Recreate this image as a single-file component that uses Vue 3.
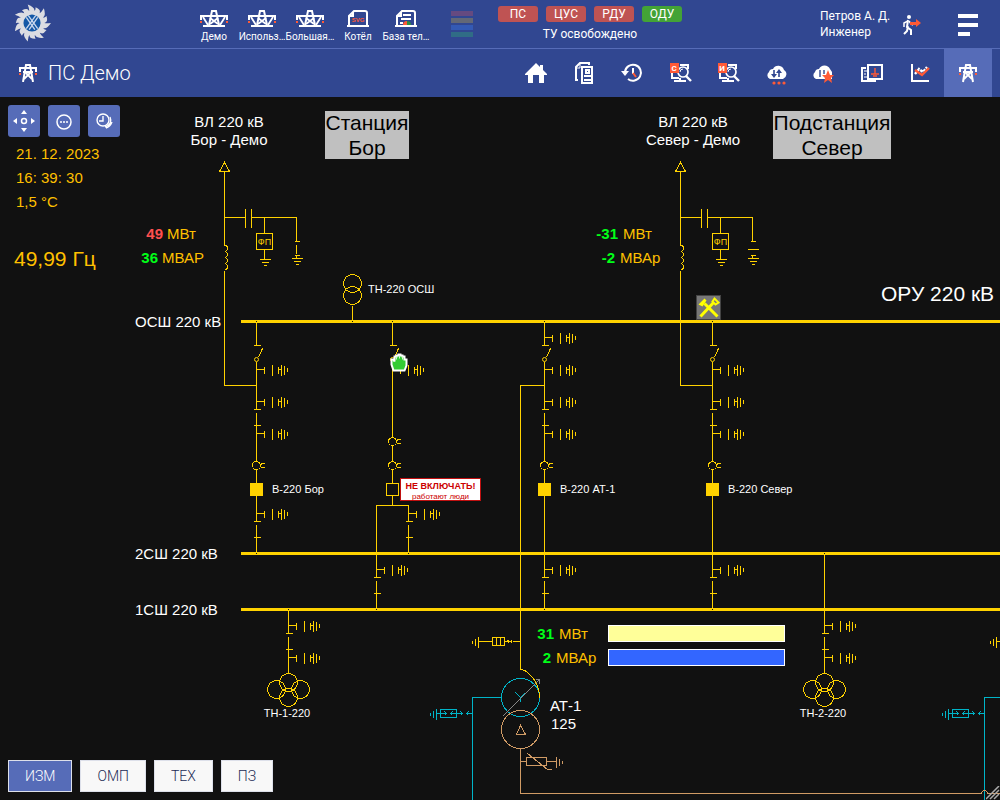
<script setup>
const shortcuts = [
  { label: 'Демо', icon: 'bridge' },
  { label: 'Использ…', icon: 'bridge' },
  { label: 'Большая…', icon: 'bridge' },
  { label: 'Котёл', icon: 'svg' },
  { label: 'База тел…', icon: 'report' }
]

const centers = [
  { name: 'ПС' }, { name: 'ЦУС' }, { name: 'РДУ' }, { name: 'ОДУ', on: true }
]

const nav = [
  { id: 'home', label: 'Главная' },
  { id: 'docs', label: 'Документы' },
  { id: 'history', label: 'История' },
  { id: 'searchS', label: 'Поиск сигналов', letter: 'С' },
  { id: 'searchI', label: 'Поиск измерений', letter: 'И' },
  { id: 'cloud', label: 'Обмен' },
  { id: 'star', label: 'Избранное' },
  { id: 'cards', label: 'Заземления' },
  { id: 'chart', label: 'Графики' },
  { id: 'pylon', label: 'Схема', active: true }
]

const layers = ['ИЗМ', 'ОМП', 'ТЕХ', 'ПЗ']

const gear = (() => {
  const teeth = 14
  const step = (Math.PI * 2) / teeth
  const p = (r, t) => `${(20 + r * Math.cos(t)).toFixed(1)} ${(20 + r * Math.sin(t)).toFixed(1)}`
  let d = ''
  for (let i = 0; i < teeth; i++) {
    const a = i * step
    const outer = i % 2 ? 17 : 20
    d += `${i ? 'L' : 'M'}${p(13, a)}Q${p(15, a + step * 0.1)} ${p(outer, a)}Q${p(17, a + step * 0.8)} ${p(14, a + step * 0.9)}`
  }
  return d + 'Z'
})()

const buses = [320, 552, 608]

const joints = [
  [256, 321], [352, 321], [392, 321], [544, 321], [712, 321],
  [256, 553], [408, 553], [824, 553],
  [288, 609], [376, 609], [544, 609], [712, 609]
]

const lineFeeders = [{ x: 224, closed: true }, { x: 680, closed: false }]

const wires = [
  'M256 321V345', 'M256 361V409', 'M256 425V461', 'M256 469V521', 'M256 537V553',
  'M392 321V345', 'M392 361V437', 'M392 445V461', 'M392 469V483', 'M392 495V505',
  'M376 577V505H408V521', 'M408 537V553', 'M376 593V609',
  'M544 321V345', 'M544 361V409', 'M544 425V461', 'M544 469V577', 'M544 593V609',
  'M544 385H520V669',
  'M712 321V345', 'M712 361V409', 'M712 425V461', 'M712 469V577', 'M712 593V609',
  'M288 609V633', 'M288 649V673', 'M824 553V633', 'M824 649V673', 'M352 305V321'
]

const openSwitches = [256, 392, 544, 712]

const closedSwitches = [
  [256, 409], [544, 409], [712, 409], [256, 521], [408, 521],
  [376, 577], [544, 577], [712, 577], [288, 633], [824, 633]
]

const groundSwitches = [
  [256, 369], [256, 401], [256, 433], [256, 513],
  [392, 369], [408, 513], [376, 569],
  [544, 337], [544, 369], [544, 401], [544, 433], [544, 569],
  [712, 369], [712, 401], [712, 433], [712, 569],
  [288, 625], [288, 657], [824, 625], [824, 657]
]

const currentTransformers = [[256, 465], [392, 441], [392, 465], [544, 465], [712, 465]]

const breakers = [
  { x: 256, on: true }, { x: 392, on: false }, { x: 544, on: true }, { x: 712, on: true }
]

const voltageTransformers = [288, 824]

const labels = [
  { x: 229, y: 127, t: 'ВЛ 220 кВ', c: 'mid' },
  { x: 229, y: 145, t: 'Бор - Демо', c: 'mid' },
  { x: 693, y: 127, t: 'ВЛ 220 кВ', c: 'mid' },
  { x: 693, y: 145, t: 'Север - Демо', c: 'mid' },
  { x: 135, y: 327, t: 'ОСШ 220 кВ' },
  { x: 135, y: 559, t: '2СШ 220 кВ' },
  { x: 135, y: 615, t: '1СШ 220 кВ' },
  { x: 881, y: 301, t: 'ОРУ 220 кВ', c: 'big' },
  { x: 550, y: 711, t: 'АТ-1' },
  { x: 551, y: 729, t: '125' },
  { x: 368, y: 293, t: 'ТН-220 ОСШ', c: 'small' },
  { x: 272, y: 493, t: 'В-220 Бор', c: 'small' },
  { x: 560, y: 493, t: 'В-220 АТ-1', c: 'small' },
  { x: 728, y: 493, t: 'В-220 Север', c: 'small' },
  { x: 287, y: 717, t: 'ТН-1-220', c: 'small mid' },
  { x: 823, y: 717, t: 'ТН-2-220', c: 'small mid' }
]

const measures = [
  { x: 163, y: 239, v: '49', ux: 167, u: 'МВт', red: true },
  { x: 158, y: 263, v: '36', ux: 162, u: 'МВАР' },
  { x: 618, y: 239, v: '-31', ux: 623, u: 'МВт' },
  { x: 615, y: 263, v: '-2', ux: 620, u: 'МВАр' },
  { x: 554, y: 639, v: '31', ux: 559, u: 'МВт' },
  { x: 551, y: 663, v: '2', ux: 556, u: 'МВАр' }
]
</script>

<template>
  <div class="app">
    <header class="topbar">
      <svg class="logo" viewBox="0 0 40 40" aria-hidden="true">
        <path :d="gear" fill="#dcdde2" />
        <circle cx="20" cy="20" r="9" fill="#1458a6" />
        <path d="M14 26L24 12M17 27L26 14M26 26L16 12M23 27L14 14" stroke="#c9d8ee" stroke-width="1.4" />
      </svg>

      <nav class="shortcuts">
        <a v-for="s in shortcuts" :key="s.label" href="#" class="shortcut">
          <svg v-if="s.icon === 'bridge'" width="28" height="17" viewBox="0 0 28 17" fill="none" stroke="#fff" stroke-width="2">
            <path d="M1 10V6H27V10M3 16H25M9 15L12 1H16L19 15" />
            <path d="M3 7L8 15M25 7L20 15M10 8L18 14M18 8L10 14" stroke-width="1.8" />
            <path d="M0 11H2V13H0ZM26 11H28V13H26Z" fill="#ff5a36" stroke="none" />
          </svg>
          <svg v-else-if="s.icon === 'svg'" width="24" height="17" viewBox="0 0 24 17" fill="none" stroke="#fff" stroke-width="2">
            <path d="M1 16H23M3 16V6L8 1H19Q21 1 21 3V16M3 6H7V2" />
            <text x="12" y="12" class="svg-tag">SVG</text>
          </svg>
          <svg v-else width="24" height="17" viewBox="0 0 24 17" fill="none" stroke="#fff" stroke-width="2">
            <path d="M1 16H23M3 16V6L8 1H19Q21 1 21 3V16M3 6H7V2" />
            <path d="M9 5H17M7 9H17M6 13H9" stroke-width="1.8" />
            <path d="M9 15A4 4 0 0 1 13 11V15Z" fill="#ff5a36" stroke="none" />
            <path d="M13 11A4 4 0 0 1 17 15H13Z" fill="#2f8f3f" stroke="none" />
          </svg>
          <span>{{ s.label }}</span>
        </a>
      </nav>

      <div class="stripes"><i class="s1"></i><i class="s2"></i><i class="s3"></i><i class="s4"></i></div>

      <div class="control">
        <div class="pills">
          <span v-for="c in centers" :key="c.name" class="pill" :class="{ on: c.on }">{{ c.name }}</span>
        </div>
        <div class="control-text">ТУ освобождено</div>
      </div>

      <div class="user">
        <div class="user-name">Петров А. Д.<br />Инженер</div>
        <button class="plain" aria-label="Выход">
          <svg width="20" height="20" viewBox="0 0 20 20" fill="none" stroke="#fff" stroke-width="2">
            <circle cx="7" cy="2" r="2" fill="#fff" stroke="none" />
            <path d="M6 5L5 12L9 15L9 20M6 11L5 16L2 19" />
            <path d="M6 6L2 8V12M7 6L9 9L11 10" stroke-width="1.5" />
            <path d="M8 7H14V4L19 8L14 12V10H8Z" fill="#ff5a36" stroke="none" />
          </svg>
        </button>
        <button class="plain menu" aria-label="Меню"><i></i><i></i><i></i></button>
      </div>
    </header>

    <div class="subbar">
      <svg class="title-icon" width="18" height="18" viewBox="0 0 18 18" fill="none" stroke="#fff" stroke-width="2">
        <path d="M1 8V4H17V8M4 18L7 1H11L14 18" />
        <path d="M6 8L13 15M12 8L5 15M4 8H14" stroke-width="1.8" />
        <path d="M0 9H2V11H0ZM16 9H18V11H16Z" fill="#ff5a36" stroke="none" />
      </svg>
      <h1>ПС Демо</h1>
      <nav class="tools">
        <button v-for="n in nav" :key="n.id" :class="{ active: n.active }" :aria-label="n.label">
          <svg width="24" height="24" viewBox="0 0 24 24" fill="none" stroke="#fff" stroke-width="2">
            <template v-if="n.id === 'home'">
              <path d="M12 2L16 6V4H19V9L23 13V14H20V22H15V14H9V22H4V14H1V13Z" fill="#fff" stroke="none" />
            </template>
            <template v-else-if="n.id === 'docs'">
              <path d="M6 19H4V6L8 2H17V4" />
              <path d="M4 7H8V3" stroke-width="1" />
              <path d="M10 6H20V22H10Z" />
              <path d="M14 9H17V12H14ZM12 15H19M12 19H19" />
            </template>
            <template v-else-if="n.id === 'history'">
              <path d="M5 11A8 8 0 1 1 8 18" />
              <path d="M1 10H9L5 15Z" fill="#fff" stroke="none" />
              <path d="M13 7V13" />
              <path d="M13 12L16 16" stroke="#ff5a36" />
            </template>
            <template v-else-if="n.letter">
              <path d="M4 12V17H11M12 4H20V8" />
              <path d="M6 20H18M12 17V20" />
              <circle cx="15" cy="11" r="5" fill="#314791" stroke-width="1.7" />
              <path d="M18 15L23 20" stroke-width="2.4" />
              <path d="M12 11A3 3 0 0 1 15 8" stroke-width="1" />
              <path d="M2 2H11V12H2Z" fill="#ff5a36" stroke="none" />
              <text x="6" y="10" class="badge-letter">{{ n.letter }}</text>
            </template>
            <template v-else-if="n.id === 'cloud'">
              <path d="M6 18A4 4 0 0 1 5 11A4 4 0 0 1 9 8A6 6 0 0 1 20 9A5 5 0 0 1 19 18Z" fill="#fff" stroke="none" />
              <path d="M10 9V15M15 16V10" stroke="#314791" stroke-width="1.6" />
              <path d="M7 13H13L10 17ZM12 12H18L15 8Z" fill="#314791" stroke="none" />
              <g fill="#ff5a36" stroke="none">
                <circle cx="10" cy="22" r="1.6" /><circle cx="15" cy="22" r="1.6" /><circle cx="20" cy="22" r="1.6" />
              </g>
            </template>
            <template v-else-if="n.id === 'star'">
              <path d="M4 18A4 4 0 0 1 3 11A4 4 0 0 1 7 8A6 6 0 0 1 18 8L20 11V18Z" fill="#fff" stroke="none" />
              <path d="M8 9V16M12 9V13" stroke="#314791" stroke-width="1.4" />
              <path d="M16 9L18 14H22L19 17L20 22L16 19L12 22L13 17L10 14H14Z" fill="#ff5a36" stroke="none" />
            </template>
            <template v-else-if="n.id === 'cards'">
              <path d="M6 7H2V20H16" />
              <path d="M4 10H7M4 13H6M4 16H7" stroke-width="1" />
              <path d="M8 4H22V18H8Z" />
              <path d="M15 7V13M11 13H19M13 15H17" stroke="#ff5a36" stroke-width="1.4" />
            </template>
            <template v-else-if="n.id === 'chart'">
              <path d="M4 3V20H21" />
              <path d="M7 13L11 8L15 11L19 6" stroke-width="2.4" stroke-dasharray="3 1" />
              <path d="M7 9L14 14L21 7" stroke="#ff5a36" stroke-width="2.4" />
            </template>
            <template v-else>
              <path d="M4 11V7H20V11M7 21L10 4H14L17 21" />
              <path d="M9 11L16 18M15 11L8 18M7 11H17" stroke-width="1.8" />
              <path d="M3 12H5V14H3ZM19 12H21V14H19Z" fill="#ff5a36" stroke="none" />
            </template>
          </svg>
        </button>
      </nav>
    </div>

    <main class="board">
      <svg class="scheme" xmlns="http://www.w3.org/2000/svg">
        <g transform="translate(0.5 -96.5)">
          <g class="yellow">
            <path v-for="w in wires" :key="w" :d="w" />

            <g v-for="f in lineFeeders" :key="f.x" :transform="`translate(${f.x} 0)`">
              <path d="M0 162L-5 171H5ZM0 171V245M0 270V385H32" />
              <path d="M0 245H2L3 247V249L1 251L3 253V255L1 257L3 259V261L1 263L3 265V267L2 269H0" />
              <path d="M0 217H21M21 208V227M27 208V227M27 217H72V241M70 241H75" />
              <path d="M40 217V233M32 233H48V249H32ZM40 249V259M35 259H46M37 262H44M39 265H42" />
              <path d="M67 258H78M69 261H76M71 264H74M70 255H75M72 255V258" />
              <path v-if="f.closed" d="M72 244V253" />
              <path v-else d="M67 249H78" />
              <text x="40" y="244" class="fp">ФП</text>
            </g>

            <g v-for="x in openSwitches" :key="x" :transform="`translate(${x} 0)`">
              <path d="M-3 345H4M6 348L2 357" />
              <circle cy="359" r="2" class="pivot" />
            </g>
            <path v-for="[x, y] in closedSwitches" :key="`${x}-${y}`" :d="`M${x - 3} ${y}H${x + 4}M${x} ${y + 3}V${y + 15}M${x - 3} ${y + 16}H${x + 4}`" />
            <g v-for="[x, y] in groundSwitches" :key="`g${x}-${y}`" :transform="`translate(${x} ${y})`">
              <path d="M0 0H8M8 -3V4M16 -5V6M22 -3V4M22 0H25M25 -5V6M28 -4V5M31 -2V2" />
            </g>
            <g v-for="[x, y] in currentTransformers" :key="`c${x}-${y}`" :transform="`translate(${x} ${y})`">
              <circle r="4" />
              <path d="M8 -2H5V-1M5 1V2H8" />
            </g>
            <path v-for="b in breakers" :key="b.x" :d="`M${b.x - 6} 483H${b.x + 6}V495H${b.x - 6}Z`" :fill="b.on ? '#ffd200' : '#111'" />

            <g v-for="x in voltageTransformers" :key="`v${x}`" :transform="`translate(${x} 0)`">
              <circle cy="682" r="9" />
              <circle cx="-12" cy="689" r="9" />
              <circle cx="12" cy="689" r="9" />
              <circle cy="697" r="9" />
            </g>
            <circle cx="352" cy="283" r="9" />
            <circle cx="352" cy="295" r="9" />

            <g v-for="x in [472, 990]" :key="`a${x}`" :transform="`translate(${x} 641)`">
              <path d="M0 -1V2M3 -3V4M6 -5V6M6 0H20M20 -4H32V4H20ZM24 -4V4M28 -4V4M32 0H36M35 -1L37 0L35 2M40 -1L38 0L40 2M40 0H48" />
            </g>
          </g>
        </g>

        <g transform="translate(0 -97)">
          <rect v-for="y in buses" :key="y" x="241" :y="y" width="4000" height="3" fill="#ffd200" />
          <rect v-for="[x, y] in joints" :key="`j${x}-${y}`" :x="x" :y="y" width="1" height="1" fill="#111" />
        </g>

        <g transform="translate(0.5 -96.5)">
          <g class="teal">
            <circle cx="520" cy="697" r="19" />
            <path d="M501 697H472V2000M984 2000V697H4000M515 692L520 697V701M520 697L524 693" />
            <g v-for="x in [430, 942]" :key="x" :transform="`translate(${x} 713)`">
              <path d="M0 -1V2M3 -3V4M6 -5V6M6 0H15M10 -4H26V4H10ZM14 -2L16 0L14 2M22 -2L20 0L22 2M20 0H32M30 -2L32 0L30 2M38 -2L36 0L38 2M36 0H42" />
            </g>
          </g>
          <g class="brown">
            <circle cx="520" cy="729" r="19" />
            <path d="M520 725L516 734H525ZM520 748V793H981Q981 790 984 790Q987 790 987 793H4000" />
            <path d="M520 761H526M526 757H546V765H526ZM546 761H556M556 756V767M559 758V765M562 760V763M527 753L547 769H551" />
          </g>
          <path class="gray" d="M502 716L539 679M535 679H539V683" />
          <path class="yellow" d="M520 669Q526 670 528 673Q539 682 539 697" />

          <rect x="608" y="625" width="176" height="16" fill="#ffff99" stroke="#fff" />
          <rect x="608" y="649" width="176" height="16" fill="#3366ff" stroke="#fff" />

          <g transform="translate(696 295)">
            <rect width="24" height="24" fill="#777" stroke="#444" />
            <path d="M4 21L18 6M21 21L8 8" stroke="#ff0" stroke-width="3" />
            <path d="M2 9L8 3L10 5L6 11Z" fill="#ff0" />
            <path d="M16 6L18 3L22 7L19 9Z" fill="#777" stroke="#ff0" stroke-width="2" />
          </g>

          <g transform="translate(390 353)">
            <path d="M3 17L1 11V6H3L4 8V3H6V2H8V1H10V2H12V3H14V6H16V12L14 17Z" fill="#33cc33" stroke="#fff" stroke-width="2" />
            <path d="M6 3V6M9 2V5M12 3V6" stroke="#d6f5d6" />
          </g>

          <rect x="400" y="478" width="80" height="22" fill="#fff" stroke="#c01010" />
          <text x="440" y="488" class="warn">НЕ ВКЛЮЧАТЬ!</text>
          <text x="440" y="498" class="warn-sub">работают люди</text>
        </g>

        <g transform="translate(0 -97)">
          <rect x="325" y="111" width="84" height="48" fill="#c0c0c0" />
          <text x="367" y="130" class="station">Станция</text>
          <text x="367" y="155" class="station">Бор</text>
          <rect x="773" y="111" width="118" height="48" fill="#c0c0c0" />
          <text x="832" y="130" class="station">Подстанция</text>
          <text x="832" y="155" class="station">Север</text>
          <text v-for="l in labels" :key="l.t + l.x" :x="l.x" :y="l.y" class="label" :class="l.c">{{ l.t }}</text>
          <template v-for="m in measures" :key="`${m.x}-${m.y}`">
            <text :x="m.x" :y="m.y" class="value" :class="{ red: m.red }">{{ m.v }}</text>
            <text :x="m.ux" :y="m.y" class="unit">{{ m.u }}</text>
          </template>
        </g>
      </svg>

      <section class="panel">
        <div class="panel-buttons">
          <button aria-label="Перемещение">
            <svg width="24" height="24" viewBox="0 0 24 24" fill="#fff">
              <path d="M12 1L15 5H9ZM12 23L15 19H9ZM1 12L5 9V15ZM23 12L19 9V15Z" />
              <circle cx="12" cy="12" r="2.5" fill="none" stroke="#fff" stroke-width="1.5" />
            </svg>
          </button>
          <button aria-label="Ещё">
            <svg width="24" height="24" viewBox="0 0 24 24" fill="none" stroke="#fff">
              <circle cx="12" cy="13" r="7" stroke-width="1.5" />
              <path d="M8 13H10M11 13H13M14 13H16" stroke-width="1.6" />
            </svg>
          </button>
          <button aria-label="Время">
            <svg width="24" height="24" viewBox="0 0 24 24" fill="none" stroke="#fff" stroke-width="1.4">
              <circle cx="11" cy="11" r="6" />
              <path d="M11 7V12H7M18 8Q21 15 13 18M20 13Q18 18 14 19" />
            </svg>
          </button>
        </div>
        <div class="readings">
          <div>21. 12. 2023</div>
          <div>16: 39: 30</div>
          <div>1,5 °C</div>
        </div>
        <div class="frequency">49,99 Гц</div>
      </section>

      <div class="layers">
        <button v-for="(l, i) in layers" :key="l" :class="{ active: i === 0 }">{{ l }}</button>
      </div>

      <svg class="grip" width="14" height="14" viewBox="0 0 14 14" stroke="#aaa" stroke-width="1.5">
        <path d="M0 13L13 0M4 13L13 4M8 13L13 8" />
      </svg>
    </main>
  </div>
</template>

<style>
html, body { background: #111; }
body { margin: 0; }
</style>

<style scoped>
.app {
  display: flex;
  flex-direction: column;
  height: 100vh;
  font-family: Roboto, "Liberation Sans", sans-serif;
  color: #fff;
}
button { font: inherit; border: 0; padding: 0; cursor: pointer; }
svg { display: block; }

.topbar {
  display: flex;
  align-items: flex-start;
  height: 48px;
  background: #314791;
  border-bottom: 1px solid #566cb8;
}
.logo { width: 38px; height: 38px; margin: 4px 0 0 13px; }
.shortcuts { display: flex; margin: 10px 0 0 139px; }
.shortcut {
  display: flex;
  flex-direction: column;
  align-items: center;
  gap: 4px;
  width: 48px;
  color: #fff;
  font-size: 10px;
  line-height: 12px;
  text-decoration: none;
  white-space: nowrap;
}
.svg-tag { font: bold 6px "Liberation Sans", sans-serif; fill: #ff5a36; stroke: none; text-anchor: middle; }
.stripes { display: flex; flex-direction: column; gap: 2px; width: 22px; margin: 11px 0 0 21px; }
.stripes i { height: 5px; }
.s1 { background: #654a80; }
.s2 { background: #636876; }
.s3 { background: #345ab4; }
.s4 { background: #306c86; }
.control { margin: 6px 0 0 25px; text-align: center; font-size: 12px; }
.pills { display: flex; gap: 8px; }
.pill { width: 40px; height: 16px; line-height: 16px; border-radius: 3px; background: #bf5353; }
.pill.on { background: #43a336; }
.control-text { margin-top: 4px; line-height: 16px; }
.user { display: flex; align-items: flex-start; margin-left: auto; padding-right: 22px; }
.user-name { width: 82px; margin-top: 8px; font-size: 12px; line-height: 16px; }
.plain { background: none; margin-top: 15px; }
.menu { display: flex; flex-direction: column; gap: 5px; margin: 14px 0 0 36px; }
.menu i { width: 20px; height: 4px; background: #fff; }
.menu i:last-child { width: 12px; }

.subbar { display: flex; align-items: center; height: 48px; padding-right: 8px; background: #314791; }
.title-icon { margin-left: 19px; }
h1 { margin: 0 0 0 11px; font-size: 20px; font-weight: 300; line-height: 24px; }
.tools { display: flex; margin-left: auto; align-self: stretch; }
.tools button { display: flex; align-items: center; justify-content: center; width: 48px; background: none; }
.tools button.active { background: #566cb8; }
.badge-letter { font: bold 8px Roboto, sans-serif; fill: #fff; stroke: none; text-anchor: middle; }

.board {
  position: relative;
  display: flex;
  flex: 1;
  flex-direction: column;
  justify-content: space-between;
  min-height: 0;
  overflow: hidden;
  background: #111;
}
.scheme {
  position: absolute;
  inset: 0;
  width: 100%;
  height: 100%;
  font-family: "Liberation Sans", Arial, sans-serif;
}
.yellow, .teal, .brown, .gray { fill: none; stroke-width: 1; shape-rendering: crispEdges; }
.yellow { stroke: #ffd200; }
.teal { stroke: #00b4c8; }
.brown { stroke: #d09b65; }
.gray { stroke: #888; }
.pivot { shape-rendering: geometricPrecision; fill: #111; }
.fp { font-size: 9px; fill: #ffd200; stroke: none; text-anchor: middle; }
.label { font-size: 15px; fill: #fff; }
.big { font-size: 21px; }
.small { font-size: 11px; }
.mid { text-anchor: middle; }
.station { font-size: 21px; fill: #000; text-anchor: middle; }
.value { font-size: 15px; font-weight: 700; fill: #00ff18; text-anchor: end; }
.value.red { fill: #ff5050; }
.unit { font-size: 15px; fill: #ffc000; }
.warn { font-size: 9px; font-weight: 700; fill: #c00; text-anchor: middle; }
.warn-sub { font-size: 8px; fill: #c00; text-anchor: middle; }

.panel { position: relative; align-self: flex-start; padding: 8px; }
.panel-buttons { display: flex; gap: 8px; }
.panel-buttons button {
  display: flex;
  align-items: center;
  justify-content: center;
  width: 32px;
  height: 32px;
  border-radius: 3px;
  background: #566cb8;
}
.readings, .frequency { font-family: "Liberation Sans", Arial, sans-serif; color: #ffc000; }
.readings { margin: 5px 0 0 8px; font-size: 15px; line-height: 24px; }
.frequency { margin: 32px 0 0 6px; font-size: 21px; line-height: 26px; }
.layers { position: relative; display: flex; gap: 8px; padding: 8px; }
.layers button {
  height: 32px;
  padding: 0 16px;
  border: 1px solid #dde0ea;
  background: #f8f8f8;
  color: #222b55;
  font-size: 14px;
  font-weight: 300;
}
.layers button.active { background: #566cb8; color: #fff; }
.grip { position: absolute; right: 0; bottom: 0; }
</style>
